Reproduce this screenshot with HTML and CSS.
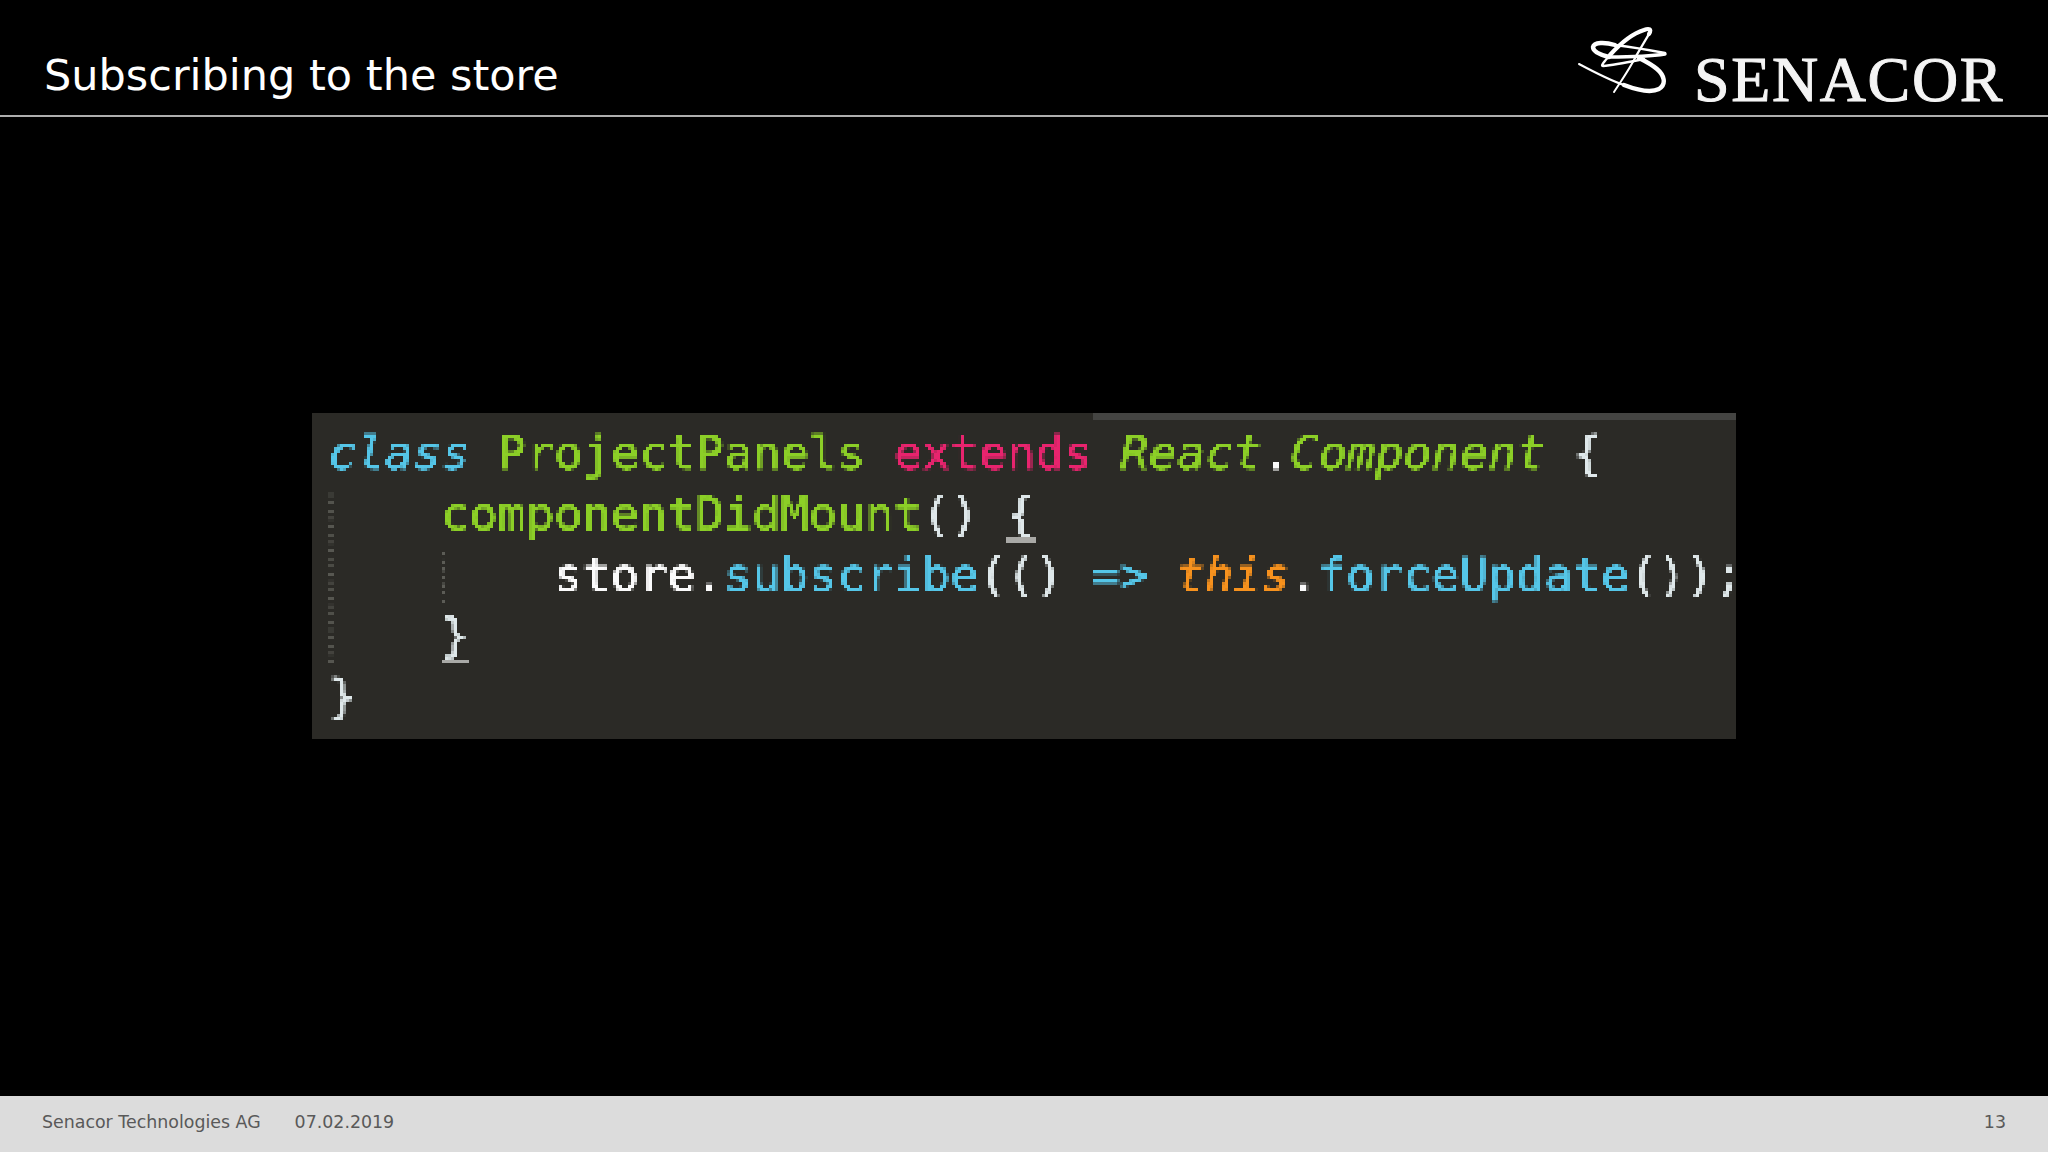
FILE: index.html
```html
<!DOCTYPE html>
<html lang="en">
<head>
<meta charset="utf-8">
<title>Subscribing to the store</title>
<link rel="stylesheet" href="styles.css">
</head>
<body>
<svg class="defs" width="0" height="0" aria-hidden="true">
  <filter id="pixelate" x="0" y="0" width="100%" height="100%" color-interpolation-filters="sRGB">
    <feFlood x="1" y="1" width="1" height="1"/>
    <feComposite width="3" height="3"/>
    <feTile result="grid"/>
    <feComposite in="SourceGraphic" in2="grid" operator="in"/>
    <feMorphology operator="dilate" radius="1"/>
  </filter>
</svg>
<div class="slide">
  <header class="top">
    <h1 class="title">Subscribing to the store</h1>
    <div class="logo">
      <svg class="mark" viewBox="0 0 120 90" aria-hidden="true">
        <g fill="none" stroke="#fff" stroke-linecap="round" stroke-linejoin="round">
          <path stroke-width="2" d="M10 49C25 57 40 65 55 70"/>
          <path stroke-width="4.4" d="M55 70C68 75 82 78 90 74C98 69 95 60 88 54C82 49 76 46 70 43"/>
          <path stroke-width="2" d="M45 77C52 66 60 55 66 43"/>
          <path stroke-width="2.4" d="M66 43C71 34 76 26 80 19"/>
          <path stroke-width="4.2" d="M80 19C83 14 80 13 75 15C62 19 50 30 41 40"/>
          <path stroke-width="2.4" d="M41 40C36 46 31 51 34 51C46 50 60 47 75 44"/>
          <path stroke-width="2.4" d="M96 38C80 35 62 32 46 30"/>
          <path stroke-width="4.4" d="M46 30C36 27 25 27 24 32C24 37 32 40 40 42"/>
          <path stroke-width="3.4" d="M40 42C58 42 78 42 96 39"/>
        </g>
      </svg>
      <span class="wordmark">SENACOR</span>
    </div>
  </header>
  <main class="stage">
    <section class="code-panel">
      <div class="code">
        <div class="line"><i class="cyan">class</i> <span class="green">ProjectPanels</span> <span class="pink">extends</span> <i class="green">React</i><span class="white">.</span><i class="green">Component</i> <span class="light">{</span></div>
        <div class="nest">
          <div class="line"><span class="green">componentDidMount</span><span class="light">()</span> <span class="light match match-open">{</span></div>
          <div class="nest nest-inner">
            <div class="line"><span class="white">store.</span><span class="cyan">subscribe</span><span class="light">(()</span> <span class="cyan">=&gt;</span> <i class="orange">this</i><span class="white">.</span><span class="cyan">forceUpdate</span><span class="light">());</span></div>
          </div>
          <div class="line"><span class="light match match-close">}</span></div>
        </div>
        <div class="line"><span class="light">}</span></div>
      </div>
    </section>
  </main>
  <footer class="foot">
    <span class="foot-org">Senacor Technologies AG</span>
    <span class="foot-date">07.02.2019</span>
    <span class="foot-page">13</span>
  </footer>
</div>
</body>
</html>
```

FILE: styles.css
```css
* { box-sizing: border-box; }
html, body { margin: 0; padding: 0; background: #000; }
.defs { position: absolute; }
.slide {
  width: 2048px;
  height: 1152px;
  display: flex;
  flex-direction: column;
  background: #000;
  overflow: hidden;
}
.top {
  height: 117px;
  flex: none;
  display: flex;
  justify-content: space-between;
  align-items: flex-start;
  padding: 0 44px 0 44px;
  border-bottom: 2px solid #aeaeae;
}
.title {
  margin: 47px 0 0;
  font: 400 43px/56px "DejaVu Sans", Verdana, sans-serif;
  color: #fff;
}
.logo {
  display: flex;
  align-items: flex-start;
  gap: 5px;
  margin-top: 15px;
}
.mark { width: 120px; height: 90px; filter: blur(0.4px); }
.wordmark {
  font: 400 64px/72px "Liberation Serif", "Times New Roman", serif;
  letter-spacing: 1.6px;
  color: #f4f4f4;
  margin-top: 29px;
  -webkit-text-stroke: 1px #f4f4f4;
}
.stage {
  flex: 1;
  padding: 296px 0 0 312px;
}
.code-panel {
  position: relative;
  width: 1424px;
  height: 326px;
  background: #2b2a26;
  overflow: hidden;
  padding: 10px 0 0 16px;
}
.code-panel::before {
  content: "";
  position: absolute;
  top: 0;
  left: 781px;
  right: 0;
  height: 7px;
  background: #444442;
}
.code {
  font: 400 47px/60.8px "DejaVu Sans Mono", "Liberation Mono", monospace;
  -webkit-text-stroke: 0.8px currentColor;
  filter: url(#pixelate);
}
.line { height: 60.8px; white-space: pre; }
.nest {
  position: relative;
  padding-left: 113px;
}
.nest::before {
  content: "";
  position: absolute;
  left: 1px;
  top: 9px;
  bottom: 2px;
  border-left: 4px dotted #5c5c56;
}
.nest-inner::before { left: 1px; top: 7px; bottom: 2px; }
.match { position: relative; }
.match::after {
  content: "";
  position: absolute;
  left: 0;
  right: 0;
  height: 4px;
  background: #a9a9a6;
}
.match-open::after { bottom: -1px; }
.match-close::after { bottom: -1px; }
.code i { font-style: italic; }
.cyan { color: #55c6e8; }
.green { color: #8ccf27; }
.pink { color: #e8246e; }
.white { color: #fbfbfb; }
.light { color: #dfe8ea; }
.orange { color: #f7921e; }
.foot {
  height: 56px;
  flex: none;
  display: flex;
  background: #dcdcdc;
  color: #595959;
  font: 400 17.4px/24px "DejaVu Sans", Verdana, sans-serif;
  padding: 14px 42px 0;
  gap: 34px;
}
.foot-page { margin-left: auto; }
```
